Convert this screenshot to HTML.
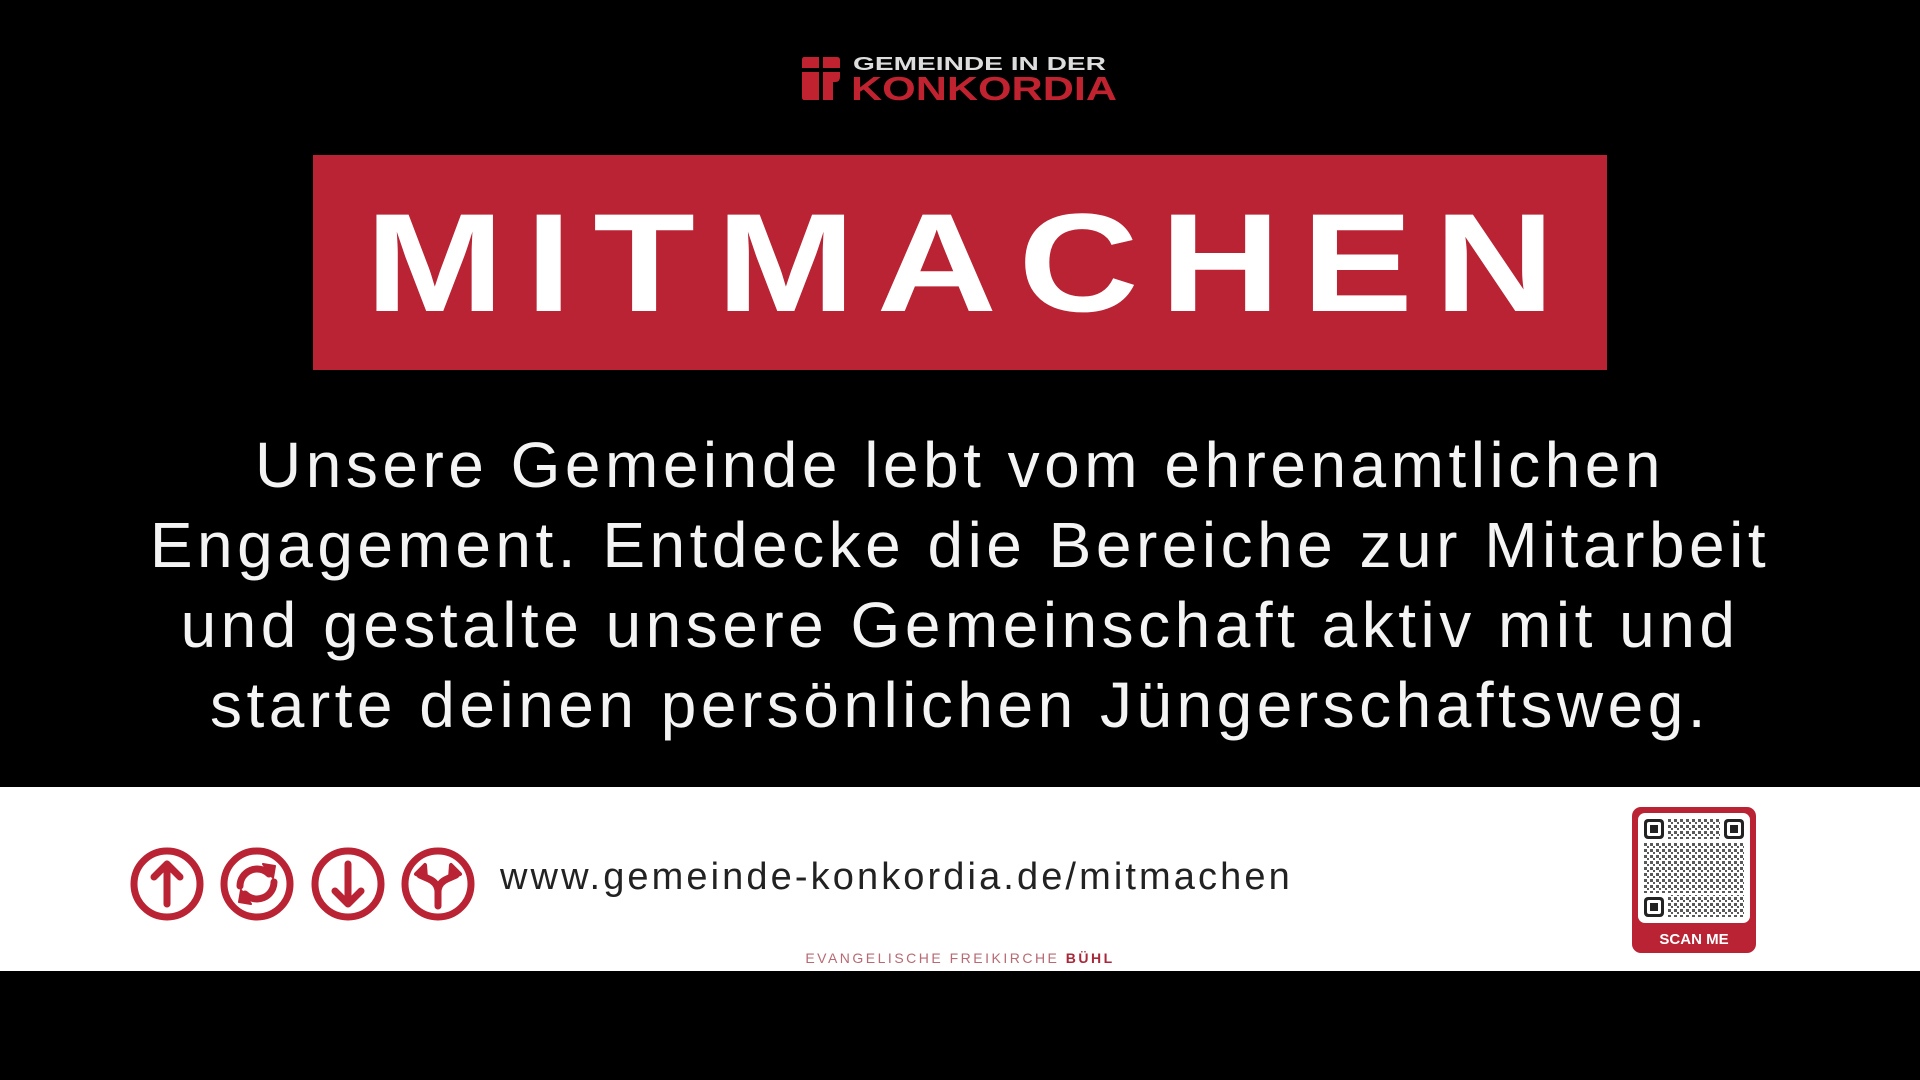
<!DOCTYPE html>
<html><head><meta charset="utf-8"><style>
*{margin:0;padding:0;box-sizing:border-box}
body{width:1920px;height:1080px;background:#000;position:relative;overflow:hidden;font-family:"Liberation Sans",sans-serif}
.abs{position:absolute}
#box{left:313px;top:155px;width:1294px;height:215px;background:#b92334}
#title{left:313px;top:155px;width:1294px;height:215px;line-height:215px;text-align:center;color:#fff;font-weight:bold;font-size:140px;letter-spacing:18px;text-indent:18px;transform:scaleX(1.19);transform-origin:center}
#para{left:0;top:425px;width:1920px;text-align:center;color:#f4f4f4;font-size:64px;line-height:80px;letter-spacing:4.5px}
#band{left:0;top:787px;width:1920px;height:184px;background:#fff}
#url{left:500px;top:856px;font-size:38px;letter-spacing:3.1px;color:#222}
#foot{left:800px;top:950px;width:320px;text-align:center;font-size:14px;letter-spacing:2.5px;color:#b76a74}
</style></head><body>
<svg class="abs" style="left:800px;top:52px" width="320" height="54" viewBox="0 0 320 54">
<path d="M4 5h15v11H2V8q0-3 2-3zM23 5h14q3 0 3 3v8H23z" fill="#c0232f"/>
<path d="M2 20h17v28H4q-2 0-2-3zM23 20h17v5q0 5-5 5h-2v18H23z" fill="#c0232f"/>
<text x="53" y="18" font-family="Liberation Sans" font-size="18" font-weight="bold" fill="#ddd" textLength="253" lengthAdjust="spacingAndGlyphs">GEMEINDE IN DER</text>
<text x="51" y="48" font-family="Liberation Sans" font-size="33" font-weight="bold" fill="#c0232f" textLength="266" lengthAdjust="spacingAndGlyphs">KONKORDIA</text>
</svg>
<div id="box" class="abs"></div>
<div id="title" class="abs">MITMACHEN</div>
<div id="para" class="abs">Unsere Gemeinde lebt vom ehrenamtlichen<br>Engagement. Entdecke die Bereiche zur Mitarbeit<br>und gestalte unsere Gemeinschaft aktiv mit und<br>starte deinen persönlichen Jüngerschaftsweg.</div>
<div id="band" class="abs"></div>
<svg class="abs" style="left:120px;top:840px" width="370" height="90" viewBox="0 0 370 90" fill="none" stroke="#b92334" stroke-linecap="round" stroke-linejoin="round">
<g stroke-width="7"><circle cx="47" cy="44" r="33"/><circle cx="137" cy="44" r="33"/><circle cx="228" cy="44" r="33"/><circle cx="318" cy="44" r="33"/></g>
<g stroke-width="7"><path d="M47 64V24M34 37l13-13 13 13"/>
<path d="M228 24v40M215 51l13 13 13-13"/>
<path d="M318 66V52q0-9-9-13l-9-4M318 52q0-9 9-13l9-4"/>
<path d="M120 46a17 17 0 0 1 29-12M154 42a17 17 0 0 1-29 12"/>
</g>
<path d="M296 34l9-9 1 13zM340 34l-9-9-1 13z" fill="#b92334" stroke-width="4"/>
<path d="M143 24l12 2-2 12zM131 64l-12-2 2-12z" fill="#b92334" stroke-width="2"/>
</svg>
<div id="url" class="abs">www.gemeinde-konkordia.de/mitmachen</div>
<div id="foot" class="abs">EVANGELISCHE FREIKIRCHE <b style="color:#a8283a">BÜHL</b></div>
<svg class="abs" style="left:1632px;top:807px" width="124" height="146" viewBox="0 0 124 146">
<defs><pattern id="d" width="6" height="6" patternUnits="userSpaceOnUse"><rect width="3" height="3" fill="#222"/><rect x="3" y="3" width="2" height="2" fill="#222"/></pattern></defs>
<rect x="0" y="0" width="124" height="146" rx="9" fill="#b92334"/>
<rect x="6" y="6" width="112" height="110" rx="7" fill="#fff"/>
<g fill="#222">
<rect x="12" y="12" width="20" height="20" rx="4"/><rect x="92" y="12" width="20" height="20" rx="4"/><rect x="12" y="90" width="20" height="20" rx="4"/>
</g>
<g fill="#fff"><rect x="15" y="15" width="14" height="14" rx="2"/><rect x="95" y="15" width="14" height="14" rx="2"/><rect x="15" y="93" width="14" height="14" rx="2"/></g>
<g fill="#222"><rect x="18" y="18" width="8" height="8"/><rect x="98" y="18" width="8" height="8"/><rect x="18" y="96" width="8" height="8"/></g>
<g opacity="0.75">
<rect x="36" y="12" width="52" height="20" fill="url(#d)"/>
<rect x="12" y="36" width="100" height="50" fill="url(#d)"/>
<rect x="36" y="88" width="76" height="22" fill="url(#d)"/>
</g>
<text x="62" y="137" text-anchor="middle" font-family="Liberation Sans" font-weight="bold" font-size="15" fill="#fff">SCAN ME</text>
</svg>
</body></html>
